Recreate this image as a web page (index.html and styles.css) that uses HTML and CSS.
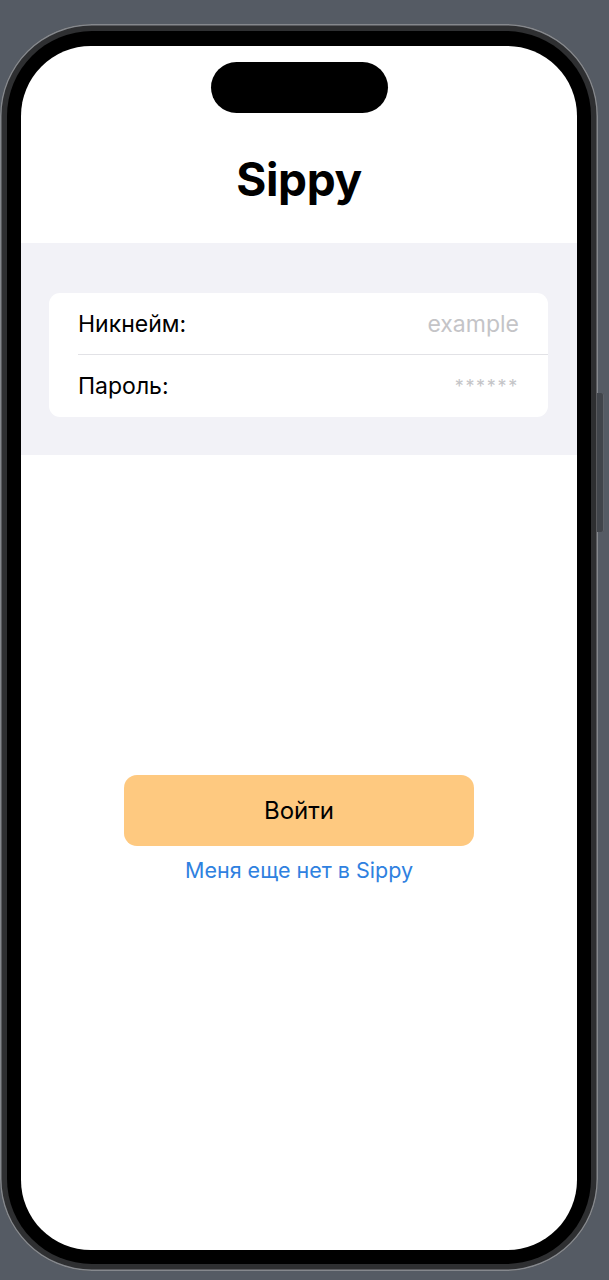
FILE: index.html
```html
<!DOCTYPE html>
<html lang="ru">
<head>
<meta charset="utf-8">
<title>Sippy</title>
<link rel="stylesheet" href="styles.css">
</head>
<body>
<div class="phone">
  <div class="side-btn"></div>
  <div class="bezel">
    <div class="screen">
      <div class="island"></div>
      <h1 class="title">Sippy</h1>
      <section class="form-section">
        <div class="card">
          <div class="row">
            <span class="label">Никнейм:</span>
            <span class="placeholder">example</span>
          </div>
          <div class="row">
            <span class="label">Пароль:</span>
            <span class="placeholder stars">******</span>
          </div>
        </div>
      </section>
      <div class="actions">
        <button class="login">Войти</button>
        <a class="signup">Меня еще нет в Sippy</a>
      </div>
    </div>
  </div>
</div>
</body>
</html>
```

FILE: styles.css
```css
html, body {
  margin: 0;
  padding: 0;
}
body {
  width: 609px;
  height: 1280px;
  overflow: hidden;
  background: #555b64;
  font-family: "Inter", "Noto Sans", sans-serif;
}
.phone {
  position: relative;
  box-sizing: border-box;
  width: 598px;
  height: 1247px;
  margin-top: 24px;
  padding: 7px;
  border-radius: 92px;
  background: #2e2f31;
  box-shadow: inset 0 0 0 1.5px #85888d;
}
.side-btn {
  position: absolute;
  left: 597px;
  top: 369px;
  width: 7px;
  height: 139px;
  border-radius: 0 2px 2px 0;
  background: #41454b;
  box-shadow: inset -1px 0 0 #5f636a;
}
.bezel {
  box-sizing: border-box;
  height: 100%;
  padding: 15px 14px 14px 14px;
  border-radius: 85px;
  background: #000;
}
.screen {
  height: 100%;
  background: #fff;
  border-radius: 70px;
  overflow: hidden;
  display: flex;
  flex-direction: column;
}
.island {
  width: 177px;
  height: 51px;
  margin: 16px auto 0;
  border-radius: 26px;
  background: #000;
}
.title {
  margin: 38px 0 36px;
  text-align: center;
  font-size: 46px;
  line-height: 56px;
  font-weight: 700;
  color: #000;
  letter-spacing: -0.4px;
}
.form-section {
  background: #f2f2f7;
  padding: 50px 29px 38px 28px;
}
.card {
  background: #fff;
  border-radius: 11px;
  padding-left: 29px;
}
.row {
  height: 61px;
  display: flex;
  align-items: center;
  justify-content: space-between;
  padding-right: 29px;
  font-size: 23px;
}
.row + .row {
  height: 62px;
  border-top: 1px solid #e2e2e6;
}
.label {
  color: #000;
}
.placeholder {
  color: #c4c4c7;
}
.stars {
  font-size: 18px;
  letter-spacing: 1.7px;
}
.actions {
  display: flex;
  flex-direction: column;
  align-items: center;
  margin-top: 320px;
}
.login {
  width: 350px;
  height: 71px;
  border: none;
  border-radius: 13px;
  background: #fec980;
  color: #000;
  font-family: inherit;
  font-size: 24px;
  cursor: pointer;
}
.signup {
  margin-top: 10px;
  font-size: 21.5px;
  line-height: 28px;
  color: #2f81e0;
  text-decoration: none;
}
```
